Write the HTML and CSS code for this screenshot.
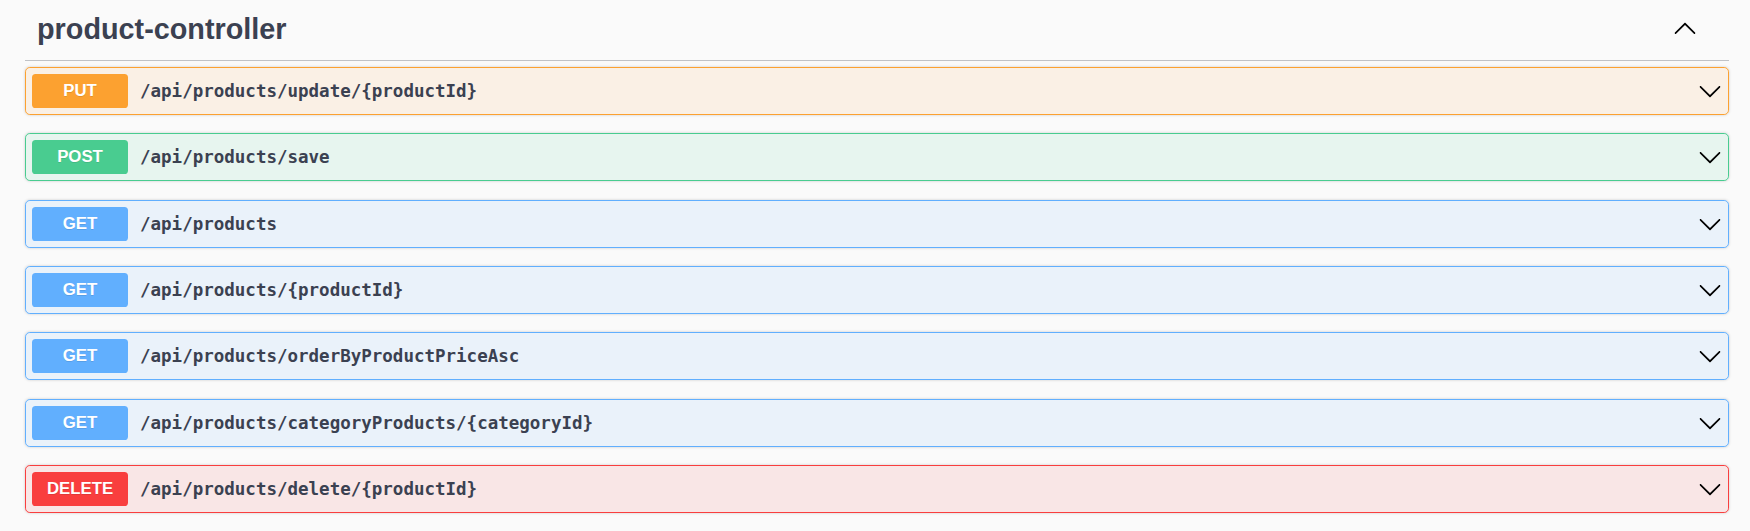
FILE: index.html
```html
<!DOCTYPE html>
<html lang="en">
<head>
<meta charset="utf-8">
<title>product-controller</title>
<link rel="stylesheet" href="styles.css">
</head>
<body>
<div class="wrapper">
  <div class="tag-header">
    <h3 class="tag-title">product-controller</h3>
    <button class="tag-toggle" aria-label="collapse">
      <svg class="arrow up" viewBox="0 0 20 20" width="24" height="24"><path d="M17.418 6.109c.272-.268.709-.268.979 0s.271.701 0 .969l-7.908 7.83c-.27.268-.707.268-.979 0l-7.908-7.83c-.27-.268-.27-.701 0-.969.271-.268.709-.268.979 0L10 13.25l7.418-7.141z"/></svg>
    </button>
  </div>
  <div class="ops">
    <div class="opblock put"><span class="method">PUT</span><span class="path">/api/products/update/{productId}</span><svg class="arrow" viewBox="0 0 20 20" width="24" height="24"><path d="M17.418 6.109c.272-.268.709-.268.979 0s.271.701 0 .969l-7.908 7.83c-.27.268-.707.268-.979 0l-7.908-7.83c-.27-.268-.27-.701 0-.969.271-.268.709-.268.979 0L10 13.25l7.418-7.141z"/></svg></div>
    <div class="opblock post"><span class="method">POST</span><span class="path">/api/products/save</span><svg class="arrow" viewBox="0 0 20 20" width="24" height="24"><path d="M17.418 6.109c.272-.268.709-.268.979 0s.271.701 0 .969l-7.908 7.83c-.27.268-.707.268-.979 0l-7.908-7.83c-.27-.268-.27-.701 0-.969.271-.268.709-.268.979 0L10 13.25l7.418-7.141z"/></svg></div>
    <div class="opblock get"><span class="method">GET</span><span class="path">/api/products</span><svg class="arrow" viewBox="0 0 20 20" width="24" height="24"><path d="M17.418 6.109c.272-.268.709-.268.979 0s.271.701 0 .969l-7.908 7.83c-.27.268-.707.268-.979 0l-7.908-7.83c-.27-.268-.27-.701 0-.969.271-.268.709-.268.979 0L10 13.25l7.418-7.141z"/></svg></div>
    <div class="opblock get"><span class="method">GET</span><span class="path">/api/products/{productId}</span><svg class="arrow" viewBox="0 0 20 20" width="24" height="24"><path d="M17.418 6.109c.272-.268.709-.268.979 0s.271.701 0 .969l-7.908 7.83c-.27.268-.707.268-.979 0l-7.908-7.83c-.27-.268-.27-.701 0-.969.271-.268.709-.268.979 0L10 13.25l7.418-7.141z"/></svg></div>
    <div class="opblock get"><span class="method">GET</span><span class="path">/api/products/orderByProductPriceAsc</span><svg class="arrow" viewBox="0 0 20 20" width="24" height="24"><path d="M17.418 6.109c.272-.268.709-.268.979 0s.271.701 0 .969l-7.908 7.83c-.27.268-.707.268-.979 0l-7.908-7.83c-.27-.268-.27-.701 0-.969.271-.268.709-.268.979 0L10 13.25l7.418-7.141z"/></svg></div>
    <div class="opblock get"><span class="method">GET</span><span class="path">/api/products/categoryProducts/{categoryId}</span><svg class="arrow" viewBox="0 0 20 20" width="24" height="24"><path d="M17.418 6.109c.272-.268.709-.268.979 0s.271.701 0 .969l-7.908 7.83c-.27.268-.707.268-.979 0l-7.908-7.83c-.27-.268-.27-.701 0-.969.271-.268.709-.268.979 0L10 13.25l7.418-7.141z"/></svg></div>
    <div class="opblock delete"><span class="method">DELETE</span><span class="path">/api/products/delete/{productId}</span><svg class="arrow" viewBox="0 0 20 20" width="24" height="24"><path d="M17.418 6.109c.272-.268.709-.268.979 0s.271.701 0 .969l-7.908 7.83c-.27.268-.707.268-.979 0l-7.908-7.83c-.27-.268-.27-.701 0-.969.271-.268.709-.268.979 0L10 13.25l7.418-7.141z"/></svg></div>
  </div>
</div>
</body>
</html>
```
FILE: styles.css
```css
html, body {
  margin: 0;
  padding: 0;
  background: #fafafa;
}
body {
  font-family: "Liberation Sans", Arial, sans-serif;
  color: #3b4151;
}
.wrapper {
  padding: 0 21px 0 25px;
}
.tag-header {
  display: flex;
  align-items: center;
  justify-content: space-between;
  padding: 13px 32px 15px 12px;
  border-bottom: 1px solid rgba(59, 65, 81, 0.3);
}
.tag-title {
  margin: 0;
  font-size: 28.8px;
  line-height: 32px;
  font-weight: 700;
  color: #3b4151;
}
.tag-toggle {
  display: flex;
  align-items: center;
  padding: 0;
  margin: 0;
  border: none;
  background: none;
}
.arrow {
  display: block;
  width: 24px;
  height: 24px;
  flex: none;
  fill: #000;
}
.arrow.up {
  transform: rotate(180deg);
}
.ops {
  padding-top: 6px;
}
.opblock {
  display: flex;
  align-items: center;
  height: 48px;
  box-sizing: border-box;
  padding: 6px;
  margin-bottom: 18.33px;
  border: 1px solid;
  border-radius: 4.8px;
  box-shadow: 0 0 3px rgba(0, 0, 0, 0.19);
}
.method {
  flex: none;
  width: 96px;
  height: 34px;
  line-height: 34px;
  text-align: center;
  font-size: 16.8px;
  font-weight: 700;
  color: #fff;
  border-radius: 3.6px;
  text-shadow: 0 1px 0 rgba(0, 0, 0, 0.1);
}
.path {
  flex: 1;
  padding: 0 12px;
  font-family: "DejaVu Sans Mono", "Liberation Mono", monospace;
  font-size: 17.5px;
  font-weight: 700;
  color: #3b4151;
  white-space: nowrap;
}
.put { border-color: #fca130; background: rgba(252, 161, 48, 0.1); }
.put .method { background: #fca130; }
.post { border-color: #49cc90; background: rgba(73, 204, 144, 0.1); }
.post .method { background: #49cc90; }
.get { border-color: #61affe; background: rgba(97, 175, 254, 0.1); }
.get .method { background: #61affe; }
.delete { border-color: #f93e3e; background: rgba(249, 62, 62, 0.1); }
.delete .method { background: #f93e3e; }
```
